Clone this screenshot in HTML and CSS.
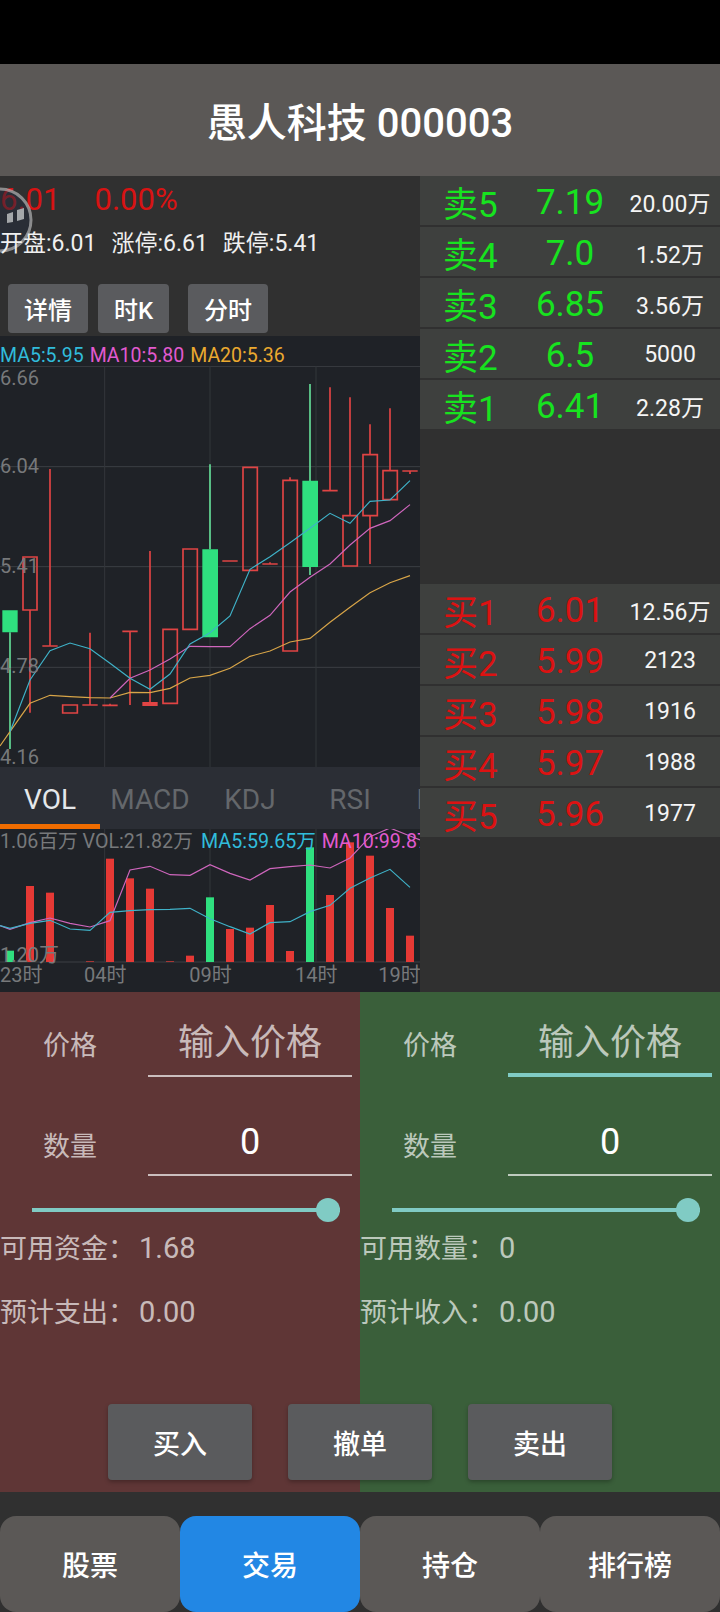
FILE: index.html
```html
<!DOCTYPE html>
<html lang="zh-CN">
<head>
<meta charset="utf-8">
<title>愚人科技 000003</title>
<link rel="stylesheet" href="styles.css">
</head>
<body>
<div class="status"></div>
<header class="title">愚人科技 000003</header>
<main class="market">
  <section class="left">
    <div class="quote"><span>6.01</span><span>0.00%</span></div>
    <div class="limits"><span>开盘:6.01</span><span>涨停:6.61</span><span>跌停:5.41</span></div>
    <div class="chips">
      <div class="chip w80">详情</div>
      <div class="chip w71">时K</div>
      <div class="chip w80 far">分时</div>
    </div>
    <div class="chart">
      <div class="legend"><span class="c-blue">MA5:5.95</span><span class="c-pink">MA10:5.80</span><span class="c-orange">MA20:5.36</span></div>
      <svg class="kline" viewBox="0 18 1260 1203" aria-label="K线图">
        <path class="grid" d="M0 19H1260M0 320H1260M0 620H1260M0 922H1260"/>
        <path class="grid-v" d="M314 18V1221M630 18V1221M948 18V1221"/>
        <path class="wick-g" d="M30 817V1167M630 313V568M930 72V645"/>
        <path class="bar-g" d="M7 751H53V817H7ZM607 568H654V832H607ZM907 362H954V621H907Z"/>
        <path class="up" d="M69 591H111V750H69ZM188 1035H232V1059H188ZM489 808H532V1030H489ZM549 567H592V808H549ZM729 322H772V631H729ZM849 361H892V873H849ZM1029 467H1072V618H1029ZM1089 284H1132V467H1089ZM1149 332H1192V419H1149Z"/>
        <path class="up" d="M90 750V1058M150 327V858M127 858H173M270 818V1035M247 1035H293M307 1036H353M330 1031V1036M390 814V1035M367 814H413M450 573V1030M667 603H713M787 612H833M810 607V612M870 352V361M990 82V392M967 392H1013M1050 112V467M1110 193V284M1110 467V612M1170 145V332M1207 333H1253M1230 333V342"/>
        <path class="up thick" d="M427 1032H473"/>
        <polyline class="l-orange" points="0,1158 30,1115 90,1030 150,1006 210,1010 270,1013 330,1014 390,997 450,998 510,985 570,954 630,946 690,925 750,889 810,873 870,846 930,835 990,787 1050,742 1110,698 1170,668 1230,647"/>
        <polyline class="l-pink" points="330,1014 390,955 450,930 510,897 570,859 630,860 690,860 750,806 810,766 870,696 930,652 990,612 1050,555 1110,505 1170,482 1230,434"/>
        <polyline class="l-blue" points="30,1115 90,960 150,872 210,849 270,866 330,910 390,955 450,988 510,942 570,852 630,818 690,768 750,628 810,590 870,548 930,505 990,460 1050,490 1110,424 1170,420 1230,362"/>
        <text class="axis" x="0" y="76">6.66</text>
        <text class="axis" x="0" y="340">6.04</text>
        <text class="axis" x="0" y="640">5.41</text>
        <text class="axis" x="0" y="940">4.78</text>
        <text class="axis" x="0" y="1213">4.16</text>
      </svg>
      <nav class="tabs">
        <div class="tab on">VOL</div>
        <div class="tab">MACD</div>
        <div class="tab">KDJ</div>
        <div class="tab">RSI</div>
        <div class="tab">BOLL</div>
      </nav>
      <svg class="vol" viewBox="0 207 1260 489" aria-label="成交量图">
        <path class="grid" d="M0 606H1260"/>
        <path class="grid-v" d="M314 207V606M630 207V606M948 207V606"/>
        <g class="vbar-r">
          <rect x="78" y="378" width="24" height="228"/><rect x="138" y="398" width="24" height="208"/><rect x="258" y="604" width="24" height="2"/><rect x="318" y="296" width="24" height="310"/><rect x="378" y="355" width="24" height="251"/><rect x="438" y="386" width="24" height="220"/><rect x="498" y="604" width="24" height="2"/><rect x="558" y="587" width="24" height="19"/><rect x="678" y="507" width="24" height="99"/><rect x="738" y="503" width="24" height="103"/><rect x="798" y="435" width="24" height="171"/><rect x="858" y="573" width="24" height="33"/><rect x="978" y="405" width="24" height="201"/><rect x="1038" y="247" width="24" height="359"/><rect x="1098" y="287" width="24" height="319"/><rect x="1158" y="444" width="24" height="162"/><rect x="1218" y="527" width="24" height="79"/>
        </g>
        <g class="vbar-g">
          <rect x="18" y="572" width="24" height="34"/><rect x="618" y="412" width="24" height="194"/><rect x="918" y="262" width="24" height="344"/>
        </g>
        <polyline class="l-pink" points="0,497 30,508 90,488 150,474 210,490 270,501 330,482 390,330 450,319 510,344 570,346 630,314 690,340 750,360 810,326 870,320 930,315 990,324 1050,294 1110,230 1170,204 1230,228 1260,240"/>
        <polyline class="l-blue" points="0,497 30,505 90,490 150,481 210,507 270,511 330,457 390,452 450,449 510,448 570,445 630,476 690,500 750,522 810,488 870,485 930,455 990,436 1050,385 1110,354 1170,328 1230,382"/>
        <text class="axis small" x="0" y="264">1.06百万 VOL:21.82万</text>
        <text class="axis small t-blue" x="603" y="264">MA5:59.65万</text>
        <text class="axis small t-pink" x="965" y="264">MA10:99.87万</text>
        <text class="axis" x="0" y="606">1.20万</text>
        <text class="axis" x="0" y="666">23时</text>
        <text class="axis" x="252" y="666">04时</text>
        <text class="axis" x="568" y="666">09时</text>
        <text class="axis" x="885" y="666">14时</text>
        <text class="axis" x="1135" y="666">19时</text>
      </svg>
    </div>
    <svg class="bubble" viewBox="0 0 34 68" aria-hidden="true">
      <circle cx="0" cy="34" r="31" class="bubble-disc"/>
      <path class="bubble-mark" d="M7 28L13 26V36L7 37ZM17 24L24 22V33L17 35Z"/>
    </svg>
  </section>
  <aside class="book">
    <div class="side sell">
      <div class="level"><span class="lv">卖5</span><span class="px">7.19</span><span class="qty">20.00万</span></div>
      <div class="level"><span class="lv">卖4</span><span class="px">7.0</span><span class="qty">1.52万</span></div>
      <div class="level"><span class="lv">卖3</span><span class="px">6.85</span><span class="qty">3.56万</span></div>
      <div class="level"><span class="lv">卖2</span><span class="px">6.5</span><span class="qty">5000</span></div>
      <div class="level"><span class="lv">卖1</span><span class="px">6.41</span><span class="qty">2.28万</span></div>
    </div>
    <div class="side buy">
      <div class="level"><span class="lv">买1</span><span class="px">6.01</span><span class="qty">12.56万</span></div>
      <div class="level"><span class="lv">买2</span><span class="px">5.99</span><span class="qty">2123</span></div>
      <div class="level"><span class="lv">买3</span><span class="px">5.98</span><span class="qty">1916</span></div>
      <div class="level"><span class="lv">买4</span><span class="px">5.97</span><span class="qty">1988</span></div>
      <div class="level"><span class="lv">买5</span><span class="px">5.96</span><span class="qty">1977</span></div>
    </div>
  </aside>
</main>
<section class="trade">
  <form class="panel p-red">
    <div class="field f-first"><span class="lbl">价格</span><div class="inp hint">输入价格</div></div>
    <div class="field"><span class="lbl">数量</span><div class="inp">0</div></div>
    <div class="slider"><i class="thumb"></i></div>
    <p class="info first">可用资金：<span class="num">1.68</span></p>
    <p class="info">预计支出：<span class="num">0.00</span></p>
  </form>
  <form class="panel p-green">
    <div class="field f-first"><span class="lbl">价格</span><div class="inp hint focus">输入价格</div></div>
    <div class="field"><span class="lbl">数量</span><div class="inp">0</div></div>
    <div class="slider"><i class="thumb"></i></div>
    <p class="info first">可用数量：<span class="num">0</span></p>
    <p class="info">预计收入：<span class="num">0.00</span></p>
  </form>
  <div class="actions">
    <div class="act">买入</div>
    <div class="act">撤单</div>
    <div class="act">卖出</div>
  </div>
</section>
<footer class="bottom">
  <div class="nav">股票</div>
  <div class="nav active">交易</div>
  <div class="nav">持仓</div>
  <div class="nav">排行榜</div>
</footer>
</body>
</html>
```

FILE: styles.css
```css
* { box-sizing: border-box; }
html, body { margin: 0; padding: 0; }
body {
  width: 720px;
  height: 1612px;
  overflow: hidden;
  background: #303030;
  color: #fff;
  font-family: Roboto, "Noto Sans CJK SC", sans-serif;
}
.status { height: 64px; background: #000; }
.title {
  height: 112px;
  background: #5b5856;
  display: flex;
  align-items: center;
  justify-content: center;
  font-size: 40px;
  font-weight: 500;
}
.market { display: flex; height: 816px; }
.left { width: 420px; position: relative; overflow: hidden; }
.quote {
  height: 46px;
  display: flex;
  gap: 34px;
  align-items: center;
  font-size: 31px;
  color: #d81313;
}
.limits {
  position: relative;
  z-index: 1;
  height: 40px;
  padding-bottom: 2px;
  display: flex;
  gap: 15px;
  align-items: center;
  font-size: 23px;
  color: #f0f0f0;
}
.chips { display: flex; gap: 10px; margin: 22px 0 3px 8px; }
.chip {
  height: 49px;
  border-radius: 4px;
  background: #5a5b5e;
  display: flex;
  align-items: center;
  justify-content: center;
  font-size: 24px;
  font-weight: 500;
}
.w80 { width: 80px; }
.w71 { width: 71px; }
.far { margin-left: 9px; }
.chart { background: #1f2227; }
.legend {
  height: 30px;
  display: flex;
  gap: 6px;
  align-items: center;
  padding-top: 8px;
  font-size: 19.5px;
  white-space: nowrap;
}
.c-blue { color: #31bcdb; }
.c-pink { color: #e25ad0; }
.c-orange { color: #eba92f; }
.kline { display: block; width: 420px; height: 401px; }
.vol { display: block; width: 420px; height: 163px; }
.grid { fill: none; stroke: #3c3f44; stroke-width: 3; }
.grid-v { fill: none; stroke: #33363b; stroke-width: 3; }
.wick-g { fill: none; stroke: #63dc96; stroke-width: 5; }
.bar-g { fill: #2fe07f; }
.up { fill: none; stroke: #e04444; stroke-width: 5; }
.thick { stroke-width: 12; }
.l-orange, .l-pink, .l-blue { fill: none; stroke-width: 3.5; }
.l-orange { stroke: #d8a548; }
.l-pink { stroke: #cf66bd; }
.l-blue { stroke: #3fb2c8; }
.axis {
  fill: #77797b;
  font-size: 60px;
  font-family: Roboto, "Noto Sans CJK SC", sans-serif;
}
.small { font-size: 59px; }
.t-blue { fill: #31bcdb; }
.t-pink { fill: #e25ad0; }
.vbar-r { fill: #e53935; }
.vbar-g { fill: #2fe07f; }
.tabs {
  display: flex;
  height: 62px;
  background: #2b2e35;
  overflow: hidden;
}
.tab {
  flex: none;
  width: 100px;
  height: 62px;
  display: flex;
  align-items: center;
  justify-content: center;
  padding-top: 3px;
  font-size: 28px;
  color: #64676b;
}
.tab.on { color: #e4e7ea; border-bottom: 5px solid #ef6c00; padding-top: 8px; }
.bubble {
  position: absolute;
  left: 0;
  top: 10px;
  width: 34px;
  height: 68px;
}
.bubble-disc { fill: rgba(36, 44, 60, .55); stroke: rgba(190, 190, 190, .65); stroke-width: 3; }
.bubble-mark { fill: #a4a7aa; }
.book { width: 300px; }
.side { display: flex; flex-direction: column; gap: 2px; }
.buy { margin-top: 155px; }
.level {
  height: 49px;
  background: #3e403e;
  display: grid;
  grid-template-columns: 100px 100px 100px;
  align-items: center;
}
.lv { font-size: 35px; padding-left: 23px; white-space: nowrap; }
.px { font-size: 35px; text-align: center; padding-top: 2px; }
.qty { font-size: 23px; text-align: center; color: #f5f5f5; white-space: nowrap; }
.sell .lv, .sell .px { color: #17e31f; }
.buy .lv, .buy .px { color: #dc1212; }
.trade {
  display: grid;
  grid-template-columns: 360px 360px;
  grid-template-rows: 500px;
}
.panel {
  grid-row: 1;
  margin: 0;
  color: rgba(255, 255, 255, .68);
}
.p-red { grid-column: 1; background: #5f3636; }
.p-green { grid-column: 2; background: #3a5f3a; }
.field {
  display: grid;
  grid-template-columns: 148px 204px;
  height: 99px;
  align-items: end;
}
.f-first { height: 85px; }
.lbl { font-size: 27px; padding-left: 43px; line-height: 40px; padding-bottom: 9px; }
.f-first .lbl { padding-bottom: 11px; }
.inp {
  height: 62px;
  border-bottom: 2px solid rgba(255, 255, 255, .68);
  text-align: center;
  font-size: 36px;
  line-height: 56px;
  color: #fff;
}
.hint { color: rgba(255, 255, 255, .68); }
.focus { border-bottom: 4px solid #80cbc4; }
.slider {
  position: relative;
  height: 4px;
  margin: 32px 20px 0 32px;
  background: #80cbc4;
}
.thumb {
  position: absolute;
  right: 0;
  top: -10px;
  width: 24px;
  height: 24px;
  border-radius: 50%;
  background: #80cbc4;
}
.info { margin: 23px 0 0; font-size: 27px; line-height: 40px; white-space: nowrap; }
.first { margin-top: 16px; }
.num { margin-left: 4px; font-size: 29px; }
.actions {
  grid-column: 1 / -1;
  grid-row: 1;
  align-self: end;
  justify-self: center;
  display: flex;
  gap: 36px;
  margin-bottom: 12px;
}
.act {
  width: 144px;
  height: 76px;
  border-radius: 4px;
  background: #5a5b5d;
  box-shadow: 0 2px 4px rgba(0, 0, 0, .28);
  display: flex;
  align-items: center;
  justify-content: center;
  font-size: 27px;
  font-weight: 500;
}
.bottom { display: flex; margin-top: 24px; height: 96px; }
.nav {
  flex: 1;
  border-radius: 16px;
  background: #5b5856;
  display: flex;
  align-items: center;
  justify-content: center;
  font-size: 28px;
  font-weight: 500;
}
.nav.active { background: #2287e4; }
```
